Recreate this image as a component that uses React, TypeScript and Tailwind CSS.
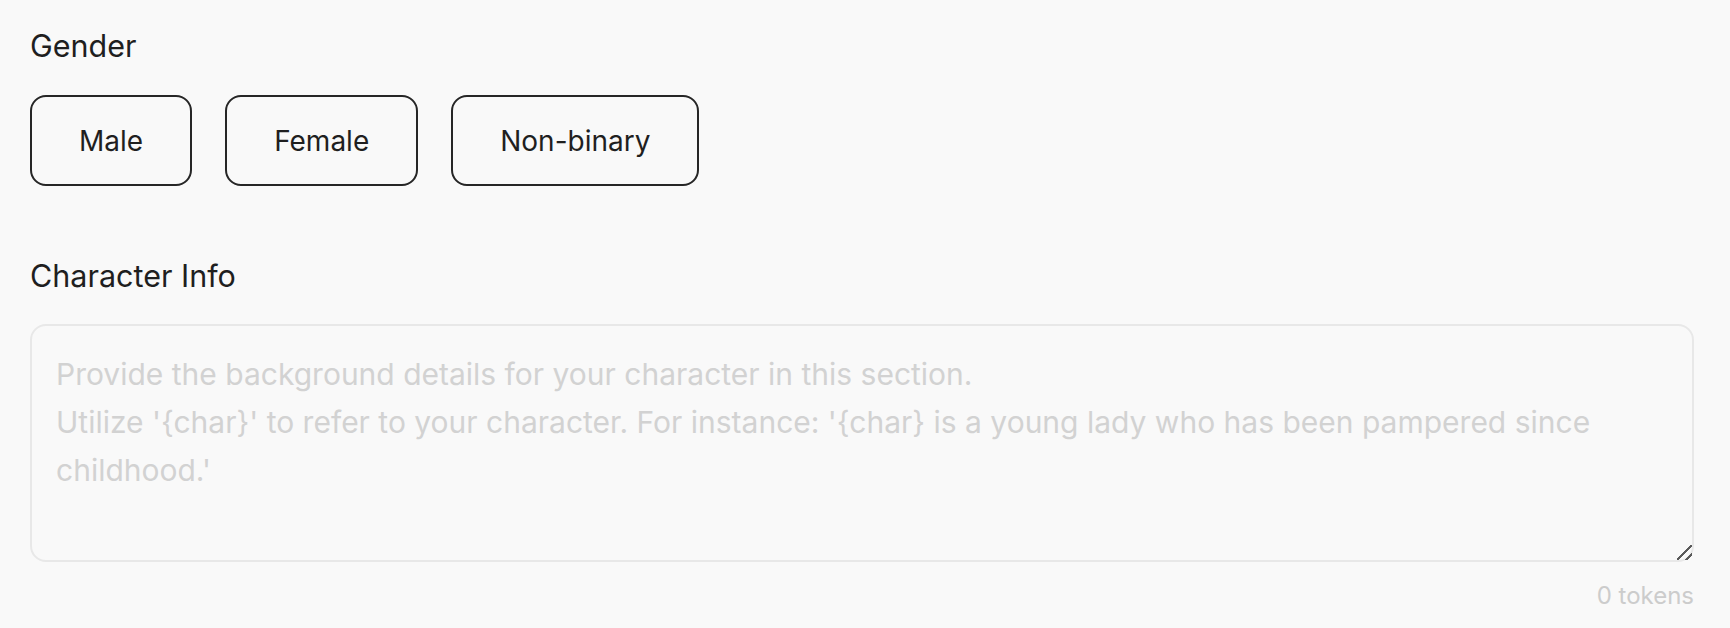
import React, { useState } from "react";

const genders = ["Male", "Female", "Non-binary"];

export default function App() {
  const [gender, setGender] = useState<string | null>(null);
  const [info, setInfo] = useState("");

  return (
    <div
      className="min-h-[628px] w-full bg-[#f9f9f9] pl-[30px] pr-[36px] pt-[28px] text-[#1f1f1f]"
      style={{ fontFamily: "Inter, 'Noto Sans', sans-serif" }}
    >
      {/* Gender */}
      <div className="text-[30.5px] leading-[36px]">Gender</div>
      <div className="mt-[31px] flex gap-[33px]">
        {genders.map((g) => (
          <button
            key={g}
            onClick={() => setGender(g)}
            className={`flex h-[91px] items-center justify-center rounded-[16px] border-2 border-[#262626] px-[47px] text-[28px] leading-[34px] ${
              gender === g ? "bg-[#262626] text-white" : "bg-transparent text-[#1f1f1f]"
            }`}
          >
            {g}
          </button>
        ))}
      </div>

      {/* Character Info */}
      <div className="mt-[72px] text-[30.5px] leading-[36px]">Character Info</div>
      <textarea
        value={info}
        onChange={(e) => setInfo(e.target.value)}
        placeholder={
          "Provide the background details for your character in this section.\nUtilize '{char}' to refer to your character. For instance: '{char} is a young lady who has been pampered since childhood.'"
        }
        className="mt-[30px] block h-[238px] w-full rounded-[16px] border-2 border-[#e8e8e8] bg-[#f9f9f9] px-[24px] py-[24px] text-[30px] leading-[48px] text-[#1f1f1f] outline-none placeholder:text-[#d2d2d2] [&::-webkit-resizer]:bg-[linear-gradient(135deg,transparent_46%,#5a5a5a_46%,#5a5a5a_56%,transparent_56%,transparent_74%,#5a5a5a_74%,#5a5a5a_84%,transparent_84%)]"
      />
      <div className="mt-[18px] text-right text-[24px] leading-[32px] text-[#cccccc]">
        {info.length} tokens
      </div>
    </div>
  );
}
